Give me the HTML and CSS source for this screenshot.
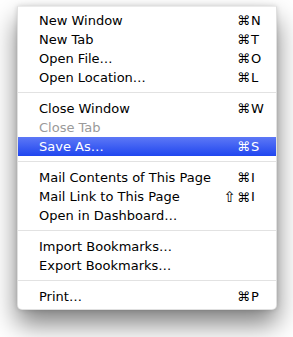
FILE: index.html
```html
<!DOCTYPE html>
<html>
<head>
    <title>File Menu</title>
    <link rel="stylesheet" href="styles.css">
</head>
<body>

    <div class="menu">
        <div class="item"><span class="label">New Window</span><span class="mods">⌘</span><span class="key">N</span></div>
        <div class="item"><span class="label">New Tab</span><span class="mods">⌘</span><span class="key">T</span></div>
        <div class="item"><span class="label">Open File…</span><span class="mods">⌘</span><span class="key">O</span></div>
        <div class="item"><span class="label">Open Location…</span><span class="mods">⌘</span><span class="key">L</span></div>
        <div class="separator"></div>
        <div class="item"><span class="label">Close Window</span><span class="mods">⌘</span><span class="key">W</span></div>
        <div class="item disabled"><span class="label">Close Tab</span></div>
        <div class="item selected"><span class="label">Save As…</span><span class="mods">⌘</span><span class="key">S</span></div>
        <div class="separator"></div>
        <div class="item"><span class="label">Mail Contents of This Page</span><span class="mods">⌘</span><span class="key">I</span></div>
        <div class="item"><span class="label">Mail Link to This Page</span><span class="mods"><span class="shift">⇧</span>⌘</span><span class="key">I</span></div>
        <div class="item"><span class="label">Open in Dashboard…</span></div>
        <div class="separator"></div>
        <div class="item"><span class="label">Import Bookmarks…</span></div>
        <div class="item"><span class="label">Export Bookmarks…</span></div>
        <div class="separator"></div>
        <div class="item"><span class="label">Print…</span><span class="mods">⌘</span><span class="key">P</span></div>
    </div>

</body>
</html>
```

FILE: styles.css
```css
html {
    height: 100%;
}

body {
    margin: 0;
    min-height: 100%;
    padding: 6px 0 0 17px;
    box-sizing: border-box;
    background-color: #ffffff;
    font-family: "DejaVu Sans", sans-serif;
    font-size: 13px;
}

.menu {
    width: 260px;
    padding: 4px 0 3px;
    background-color: #ffffff;
    border: 1px solid rgba(0, 0, 0, 0.12);
    border-top-color: rgba(0, 0, 0, 0.08);
    border-radius: 0 0 5px 5px;
    box-sizing: border-box;
    box-shadow: 0 0 5px rgba(0, 0, 0, 0.15), 0 14px 26px rgba(0, 0, 0, 0.5);
}

.item {
    display: flex;
    align-items: center;
    height: 19px;
    padding: 0 3px 0 21px;
    color: #000000;
}

.item .label {
    flex: 1;
}

.item .mods {
    text-align: right;
}

.item .shift {
    font-size: 15px;
    margin-right: 1px;
}

.item .key {
    width: 22px;
    padding-left: 1px;
}

.item.disabled {
    color: #9a9a9a;
}

.item.selected {
    color: #ffffff;
    background: linear-gradient(#5d78f6, #2046ef);
}

.separator {
    height: 1px;
    margin: 5px 0 6px;
    background-color: #e2e2e2;
}
```
